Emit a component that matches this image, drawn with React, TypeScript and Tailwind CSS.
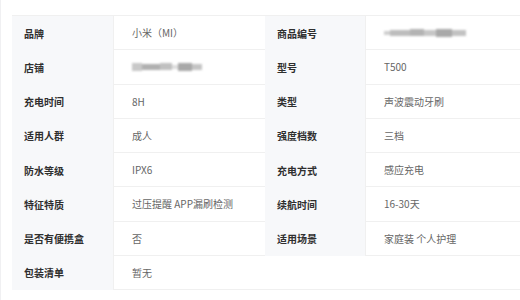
import React from "react";

const rows: [string, React.ReactNode, string | null, React.ReactNode][] = [
  ["品牌", "小米（MI）", "商品编号", "BLUR2"],
  ["店铺", "BLUR1", "型号", "T500"],
  ["充电时间", "8H", "类型", "声波震动牙刷"],
  ["适用人群", "成人", "强度档数", "三档"],
  ["防水等级", "IPX6", "充电方式", "感应充电"],
  ["特征特质", "过压提醒 APP漏刷检测", "续航时间", "16-30天"],
  ["是否有便携盒", "否", "适用场景", "家庭装 个人护理"],
  ["包装清单", "暂无", null, null],
];

function Blur1() {
  return (
    <div className="flex items-center gap-0 blur-[1.2px]">
      <div className="w-[10px] h-[8px] bg-[#c8c8c8]" />
      <div className="w-[18px] h-[6px] bg-[#b0b0b0]" />
      <div className="w-[12px] h-[7px] bg-[#c0c0c0]" />
      <div className="w-[6px] h-[4px] bg-[#dddddd]" />
      <div className="w-[14px] h-[8px] bg-[#a8a8a8]" />
      <div className="w-[10px] h-[6px] bg-[#c4c4c4]" />
    </div>
  );
}

function Blur2() {
  return (
    <div className="flex items-center gap-0 blur-[1.2px]">
      <div className="w-[6px] h-[4px] bg-[#cfcfcf]" />
      <div className="w-[20px] h-[6px] bg-[#bdbdbd]" />
      <div className="w-[14px] h-[7px] bg-[#b3b3b3]" />
      <div className="w-[12px] h-[6px] bg-[#c6c6c6]" />
      <div className="w-[16px] h-[8px] bg-[#a9a9a9]" />
      <div className="w-[14px] h-[6px] bg-[#c2c2c2]" />
    </div>
  );
}

function renderVal(v: React.ReactNode) {
  if (v === "BLUR1") return <Blur1 />;
  if (v === "BLUR2") return <Blur2 />;
  return v;
}

const labelCls =
  "h-[34.25px] bg-[#f7f8fa] flex items-center pl-[12px] text-[10px] font-bold text-[#2f2f2f]";
const valueCls =
  "h-[34.25px] flex items-center pl-[18px] text-[10px] text-[#666] border-b border-l border-[#f0f0f0]";

export default function App() {
  return (
    <div
      className="w-[520px] h-[300px] bg-white flex overflow-hidden"
      style={{ fontFamily: '"Noto Sans CJK SC", "Noto Sans", sans-serif' }}
    >
      <div className="w-[4px] h-full bg-[#f9f9fa] border-r border-[#f0f0f2]" />
      <div className="pl-[11px] pt-[15px]">
        <div className="grid grid-cols-[101px_152px_100px_160px] border-t border-[#f0f0f0]">
          {rows.map(([l1, v1, l2, v2], i) => (
            <React.Fragment key={i}>
              <div className={labelCls}>{l1}</div>
              <div className={valueCls}>{renderVal(v1)}</div>
              {l2 ? (
                <div className={labelCls}>{l2}</div>
              ) : (
                <div className="h-[34.25px] border-b border-[#f0f0f0]" />
              )}
              {l2 ? (
                <div className={valueCls}>{renderVal(v2)}</div>
              ) : (
                <div className="h-[34.25px] border-b border-[#f0f0f0]" />
              )}
            </React.Fragment>
          ))}
        </div>
      </div>
    </div>
  );
}
